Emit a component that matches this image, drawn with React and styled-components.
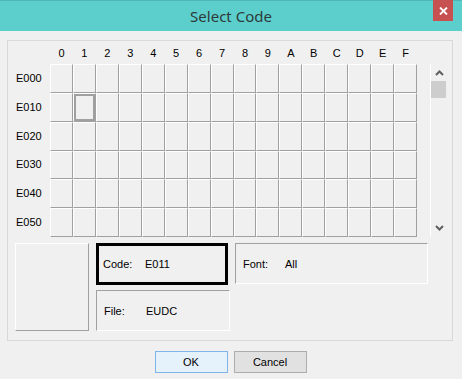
import React from "react";
import styled, { createGlobalStyle } from "styled-components";

const Global = createGlobalStyle`
  html, body { margin: 0; padding: 0; background: #f0f0f0; }
  #root { width: 462px; height: 379px; overflow: hidden; }
`;

const Window = styled.div`
  width: 462px;
  height: 379px;
  background: #f0f0f0;
  display: flex;
  flex-direction: column;
  font-family: "Liberation Sans", Arial, sans-serif;
  font-size: 11px;
  color: #000;
  box-sizing: border-box;
`;

const TitleBar = styled.div`
  height: 31px;
  flex: none;
  background: #5ccfcd;
  border-top: 1px solid #4fb8b6;
  box-sizing: border-box;
  display: grid;
  grid-template-columns: 1fr auto 1fr;
  align-items: center;
`;

const Title = styled.div`
  grid-column: 2;
  font-family: "Noto Sans", "Open Sans", sans-serif;
  font-size: 15px;
  color: #2e3a3a;
  margin-top: -1px;
`;

const CloseButton = styled.div`
  grid-column: 3;
  justify-self: end;
  align-self: start;
  margin-top: -1px;
  margin-right: 9px;
  width: 20px;
  height: 21px;
  background: #c75050;
  display: flex;
  align-items: center;
  justify-content: center;
`;

const GroupBox = styled.div`
  margin: 9px 0 0 7px;
  width: 446px;
  height: 301px;
  box-sizing: border-box;
  border: 1px solid #d9d9d9;
  display: flex;
  flex-direction: column;
  padding-bottom: 9px;
`;

const HeaderRow = styled.div`
  height: 23px;
  padding-left: 42px;
  display: grid;
  grid-template-columns: repeat(16, 1fr);
  width: ${42 + 367}px;
  box-sizing: border-box;
  align-items: center;
`;

const ColHeader = styled.div`
  text-align: center;
  font-size: 11px;
  line-height: 13px;
  padding-top: 1px;
`;

const MainRow = styled.div`
  display: flex;
  height: 173px;
`;

const LabelColumn = styled.div`
  width: 42px;
  padding-left: 8px;
  box-sizing: border-box;
  display: grid;
  grid-template-rows: repeat(6, 1fr);
  align-items: center;
`;

const RowLabel = styled.div`
  font-size: 11px;
  padding-bottom: 1px;
`;

const CodeGrid = styled.div`
  width: 367px;
  height: 173px;
  display: grid;
  grid-template-columns: repeat(16, 1fr);
  grid-template-rows: repeat(6, 1fr);
`;

const Cell = styled.div`
  box-sizing: border-box;
  background: #f0f0f0;
  border-top: 1px solid #ffffff;
  border-left: 1px solid #ffffff;
  border-right: 1px solid #a0a0a0;
  border-bottom: 1px solid #a0a0a0;
  box-shadow: ${(p) => (p.$selected ? "inset 0 0 0 2px #a0a0a0" : "none")};
`;

const ScrollBar = styled.div`
  margin-left: 13px;
  width: 17px;
  height: 172px;
  box-sizing: border-box;
  border-left: 1px solid #ffffff;
  display: flex;
  flex-direction: column;
`;

const ArrowBox = styled.div`
  height: 17px;
  display: flex;
  align-items: center;
  justify-content: center;
  margin-top: ${(p) => (p.$down ? "auto" : "0")};
`;

const Thumb = styled.div`
  height: 17px;
  width: 15px;
  background: #cdcdcd;
`;

const BottomArea = styled.div`
  margin-top: 6px;
  height: 88px;
  display: flex;
  padding-left: 7px;
  align-items: flex-start;
`;

const PreviewBox = styled.div`
  width: 74px;
  height: 88px;
  box-sizing: border-box;
  border-top: 1px solid #ffffff;
  border-left: 1px solid #ffffff;
  border-right: 1px solid #a0a0a0;
  border-bottom: 1px solid #a0a0a0;
`;

const InfoColumn = styled.div`
  margin-left: 7px;
  display: flex;
  flex-direction: column;
  gap: 5px;
`;

const InfoBox = styled.div`
  width: ${(p) => p.$w}px;
  height: ${(p) => p.$h}px;
  box-sizing: border-box;
  display: flex;
  align-items: center;
  padding-left: ${(p) => (p.$focused ? 4 : 7)}px;
  border: ${(p) => (p.$focused ? "3px solid #000" : "1px solid")};
  border-color: ${(p) =>
    p.$focused ? "#000" : "#a0a0a0 #ffffff #ffffff #a0a0a0"};
  margin-left: ${(p) => p.$ml || 0}px;
`;

const InfoLabel = styled.span`
  width: 42px;
  flex: none;
`;

const ButtonRow = styled.div`
  margin-top: 10px;
  display: flex;
  justify-content: center;
  gap: 6px;
  padding-right: 1px;
`;

const Button = styled.div`
  width: 73px;
  height: 22px;
  box-sizing: border-box;
  display: flex;
  align-items: center;
  justify-content: center;
  font-size: 11px;
  border: 1px solid ${(p) => (p.$primary ? "#7eb4ea" : "#adadad")};
  background: ${(p) => (p.$primary ? "#e5f1fb" : "#e1e1e1")};
`;

const Chevron = ({ down }) => (
  <svg width="9" height="6" viewBox="0 0 9 6">
    <path
      d={down ? "M1 1 L4.5 4.5 L8 1" : "M1 5 L4.5 1.5 L8 5"}
      fill="none"
      stroke="#606060"
      strokeWidth="2"
    />
  </svg>
);

const cols = ["0", "1", "2", "3", "4", "5", "6", "7", "8", "9", "A", "B", "C", "D", "E", "F"];
const rows = ["E000", "E010", "E020", "E030", "E040", "E050"];

export default function App() {
  return (
    <>
      <Global />
      <Window>
        <TitleBar>
          <Title>Select Code</Title>
          <CloseButton>
            <svg width="9" height="8" viewBox="0 0 9 8">
              <path d="M1 0.5 L8 7.5 M8 0.5 L1 7.5" stroke="#fff" strokeWidth="1.8" />
            </svg>
          </CloseButton>
        </TitleBar>
        <GroupBox>
          <HeaderRow>
            {cols.map((c) => (
              <ColHeader key={c}>{c}</ColHeader>
            ))}
          </HeaderRow>
          <MainRow>
            <LabelColumn>
              {rows.map((r) => (
                <RowLabel key={r}>{r}</RowLabel>
              ))}
            </LabelColumn>
            <CodeGrid>
              {rows.map((r, ri) =>
                cols.map((c, ci) => (
                  <Cell key={r + c} $selected={ri === 1 && ci === 1} />
                ))
              )}
            </CodeGrid>
            <ScrollBar>
              <ArrowBox>
                <Chevron />
              </ArrowBox>
              <Thumb />
              <ArrowBox $down>
                <Chevron down />
              </ArrowBox>
            </ScrollBar>
          </MainRow>
          <BottomArea>
            <PreviewBox />
            <InfoColumn>
              <InfoBox $w={132} $h={42} $focused>
                <InfoLabel>Code:</InfoLabel>
                <span>E011</span>
              </InfoBox>
              <InfoBox $w={134} $h={41}>
                <InfoLabel>File:</InfoLabel>
                <span>EUDC</span>
              </InfoBox>
            </InfoColumn>
            <InfoBox $w={193} $h={41} $ml={5}>
              <InfoLabel>Font:</InfoLabel>
              <span>All</span>
            </InfoBox>
          </BottomArea>
        </GroupBox>
        <ButtonRow>
          <Button $primary>OK</Button>
          <Button>Cancel</Button>
        </ButtonRow>
      </Window>
    </>
  );
}
